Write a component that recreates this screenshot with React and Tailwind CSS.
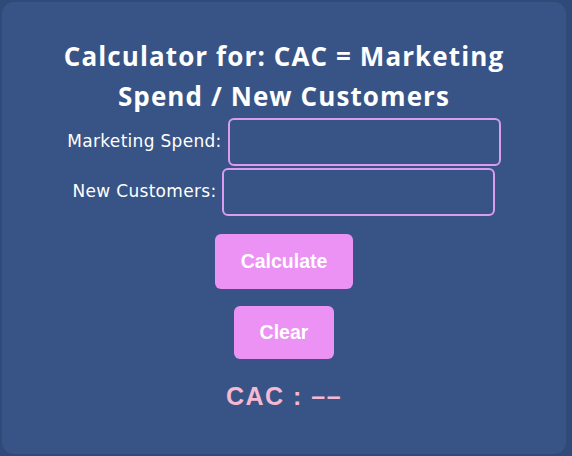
import { useState } from 'react'

const tituloFont = { fontFamily: '"Open Sans", "Noto Sans", sans-serif' }
const labelFont = { fontFamily: '"DejaVu Sans", "Noto Sans", sans-serif' }

export default function App() {
  const [spend, setSpend] = useState('')
  const [customers, setCustomers] = useState('')
  const [cac, setCac] = useState('––')

  const calcular = () => {
    const s = parseFloat(spend)
    const c = parseFloat(customers)
    if (!isNaN(s) && !isNaN(c) && c !== 0) setCac((s / c).toFixed(2))
  }

  const limpiar = () => {
    setSpend('')
    setCustomers('')
    setCac('––')
  }

  return (
    <div className="w-[572px] h-[456px] bg-[#2f4a79] pl-[2px] pr-[6px] py-[2px]">
      <div className="h-full rounded-xl bg-[#385486] flex flex-col items-center pt-[34px]">
        {/* Titulo */}
        <h1
          className="text-white text-[26px] leading-[40px] font-bold tracking-[1.1px] text-center w-[480px]"
          style={tituloFont}
        >
          Calculator for: CAC = Marketing Spend / New Customers
        </h1>

        {/* Campos */}
        <div className="flex flex-col items-center gap-[2px] mt-[2px]">
          <label className="flex items-center gap-[6px]">
            <span className="text-white text-[17px] tracking-[0.3px]" style={labelFont}>Marketing Spend:</span>
            <input
              value={spend}
              onChange={e => setSpend(e.target.value)}
              className="w-[273px] h-[48px] rounded-md border-2 border-[#d99cf0] bg-transparent text-white px-2 outline-none"
            />
          </label>
          <label className="flex items-center gap-[6px]">
            <span className="text-white text-[17px] tracking-[0.3px]" style={labelFont}>New Customers:</span>
            <input
              value={customers}
              onChange={e => setCustomers(e.target.value)}
              className="w-[273px] h-[48px] rounded-md border-2 border-[#d99cf0] bg-transparent text-white px-2 outline-none"
            />
          </label>
        </div>

        {/* Botones */}
        <button
          onClick={calcular}
          className="mt-[18px] h-[55px] px-[26px] rounded-md bg-[#eb92f4] text-white text-[19.5px] font-bold font-['Liberation_Sans',sans-serif]"
        >
          Calculate
        </button>
        <button
          onClick={limpiar}
          className="mt-[17px] h-[53px] px-[26px] rounded-md bg-[#eb92f4] text-white text-[19.5px] font-bold font-['Liberation_Sans',sans-serif]"
        >
          Clear
        </button>

        {/* Resultado */}
        <p className="mt-[22px] text-[#f5b9d2] text-[25px] leading-[30px] font-bold tracking-[1.5px] font-['Liberation_Sans',sans-serif]">
          CAC : {cac}
        </p>
      </div>
    </div>
  )
}
